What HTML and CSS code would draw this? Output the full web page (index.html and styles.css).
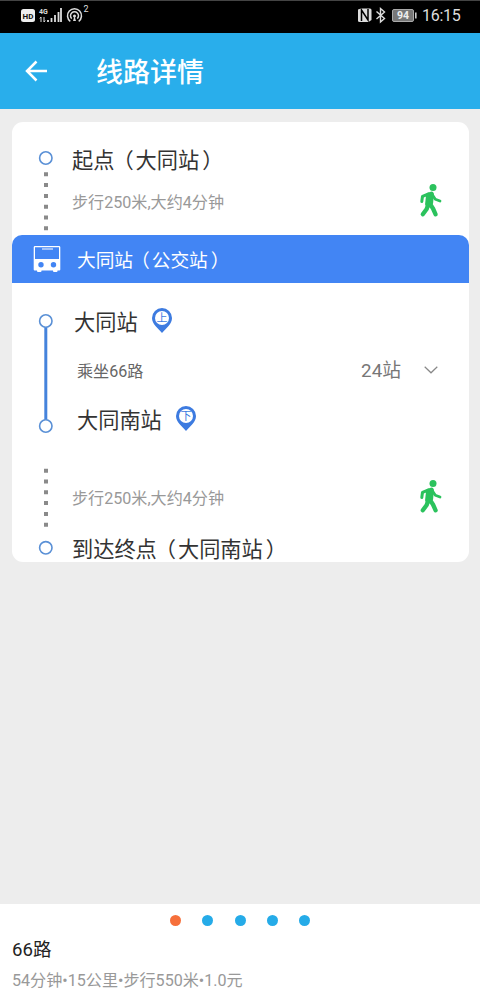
FILE: index.html
```html
<!DOCTYPE html>
<html lang="zh-CN">
<head>
<meta charset="utf-8">
<title>线路详情</title>
<link rel="stylesheet" href="styles.css">
</head>
<body>
<div class="app">
  <div class="status">
    <svg class="status-icons" width="80" height="33" viewBox="0 0 80 33">
      <rect x="1" y="9" width="14" height="13" rx="2.5" fill="#eee"/>
      <text class="hd" x="8" y="18.7" text-anchor="middle">HD</text>
      <text class="net" x="19" y="14">4G</text>
      <path d="M21 17v5M19.800 18.500l1.200-1.500M24 17v5M25.200 20.500l-1.200 1.500" stroke="#ddd" stroke-width="1" fill="none"/>
      <path d="M28 22v-2M31.500 22v-4M35 22v-7M38.500 22v-10M41 22V8" stroke="#ddd" stroke-width="1.800"/>
      <g fill="none" stroke="#ddd" stroke-width="1.500">
        <path d="M50.300 21.300a7 7 0 1 1 8.400 0"/>
        <path d="M51.700 18.600a4 4 0 1 1 5.600 0"/>
      </g>
      <circle cx="54.500" cy="16" r="1.500" fill="#ddd"/>
      <path d="M54.500 16l-1.500 5h3z" fill="#ddd"/>
      <text class="sup" x="63.500" y="12">2</text>
    </svg>
    <div class="status-right">
      <svg width="61" height="33" viewBox="0 0 61 33">
        <path d="M1 9.500l3-1h9q1.500 0 1.500 1.500v10l-3 2H2.500Q1 22 1 20.500z" fill="#ddd"/>
        <path d="M4.500 21V10l6.500 10V9" fill="none" stroke="#000" stroke-width="1.500"/>
        <path d="M19.500 11.500l8 7-4 3.500V8.500l4 3.500-8 7" fill="none" stroke="#ddd" stroke-width="1.400"/>
        <rect x="35.500" y="9.500" width="21" height="12" rx="1.500" fill="#777" stroke="#aaa"/>
        <rect x="58" y="12.500" width="1.600" height="6" fill="#ccc"/>
        <text class="battery" x="46" y="19.300" text-anchor="middle">94</text>
      </svg>
      <span class="time">16:15</span>
    </div>
  </div>
  <header class="header">
    <svg width="24" height="24" viewBox="0 0 24 24"><path d="M23 12H3.500M12.500 2.500L3 12l9.500 9.500" fill="none" stroke="#fff" stroke-width="2.500"/></svg>
    <h1>线路详情</h1>
  </header>
  <main class="main">
    <section class="card">
      <div class="leg start">
        <svg class="rail" width="60" height="113" viewBox="0 0 60 113">
          <circle cx="33.800" cy="36" r="6.200" class="ring"/>
          <path d="M34 50.300v60" class="dash"/>
        </svg>
        <div class="texts">
          <div class="stop">起点<span class="open">（</span>大同站<span class="close">）</span></div>
          <div class="walk"><span>步行250米,大约4分钟</span>
            <svg class="man" width="24" height="34" viewBox="0 0 24 34"><use href="#walker"/></svg>
          </div>
        </div>
      </div>
      <div class="band">
        <svg width="28" height="28" viewBox="0 0 28 28">
          <path d="M2 1h24q1.300 0 1.300 1.300V24.500q0 1-1 1H24.500v.5q0 1-1 1h-2.500q-1 0-1-1v-.5H8.500v.5q0 1-1 1H5q-1 0-1-1v-.5H1.700q-1 0-1-1V2.300Q.7 1 2 1z" fill="#fff"/>
          <path d="M2 2.200h24V14H2z" fill="#4285f4"/>
          <path d="M9 4h11" stroke="#fff" stroke-width="1.200"/>
          <circle cx="8" cy="19.800" r="2.700" fill="#4285f4"/><circle cx="20.500" cy="19.800" r="2.700" fill="#4285f4"/>
        </svg>
        <div class="band-name">大同站<span class="open">（</span>公交站<span class="close">）</span></div>
      </div>
      <div class="leg ride">
        <svg class="rail" width="62" height="171" viewBox="0 0 62 171">
          <path d="M33.800 44v93" stroke="#4583dc" stroke-width="3"/>
          <circle cx="33.800" cy="38" r="6.200" class="ring"/>
          <circle cx="33.800" cy="143" r="6.200" class="ring"/>
        </svg>
        <div class="texts">
          <div class="stop">大同站
            <svg class="pin" width="20" height="26" viewBox="0 0 20 26"><path d="M10 25C6 20.500 0 16 0 10a10 10 0 0 1 20 0c0 6-6 10.500-10 15z" fill="#3d7be0"/><circle cx="10" cy="10" r="7" fill="#fff"/><text x="10" y="14" text-anchor="middle">上</text></svg>
          </div>
          <div class="line"><span>乘坐66路</span><span class="count">24站</span>
            <svg width="14" height="8" viewBox="0 0 14 8"><path d="M.7.700L7 6.800 13.300.700" fill="none" stroke="#888" stroke-width="1.200"/></svg>
          </div>
          <div class="stop off">大同南站
            <svg class="pin" width="20" height="26" viewBox="0 0 20 26"><path d="M10 25C6 20.500 0 16 0 10a10 10 0 0 1 20 0c0 6-6 10.500-10 15z" fill="#3d7be0"/><circle cx="10" cy="10" r="7" fill="#fff"/><text x="10" y="14" text-anchor="middle">下</text></svg>
          </div>
        </div>
      </div>
      <div class="leg end">
        <svg class="rail" width="60" height="108" viewBox="0 0 60 108">
          <path d="M34 14.700v60" class="dash"/>
          <circle cx="33.800" cy="93.800" r="6.200" class="ring"/>
        </svg>
        <div class="texts">
          <div class="walk"><span>步行250米,大约4分钟</span>
            <svg class="man" width="24" height="34" viewBox="0 0 24 34">
              <g id="walker" fill="none" stroke="#2bc25d" stroke-linecap="round" stroke-linejoin="round">
                <circle cx="14" cy="3.500" r="3.500" fill="#2bc25d" stroke="none"/>
                <path d="M9.500 11l3-1-.8 9-3.200 1z" fill="#2bc25d" stroke-width="4.800"/>
                <path d="M9.500 10L3.500 12.300 2.800 17.500" stroke-width="3"/>
                <path d="M13.500 11l2.800 4.200 4.700 1.800" stroke-width="2.800"/>
                <path d="M9.500 19.500L7.700 25l-3.900 5.300M11 20l3 4.500 2.600 5.800" stroke-width="4.300"/>
              </g>
            </svg>
          </div>
          <div class="stop">到达终点<span class="open">（</span>大同南站<span class="close">）</span></div>
        </div>
      </div>
    </section>
  </main>
  <footer class="summary">
    <div class="dots"><i class="dot active"></i><i class="dot"></i><i class="dot"></i><i class="dot"></i><i class="dot"></i></div>
    <div class="route">66路</div>
    <div class="meta">54分钟•15公里•步行550米•1.0元</div>
  </footer>
</div>
</body>
</html>
```
FILE: styles.css
```css
* { box-sizing: border-box; }
body { margin: 0; font-family: Roboto, "Noto Sans CJK SC", sans-serif; }
svg { display: block; flex: none; }
.app { width: 480px; height: 1004px; display: flex; flex-direction: column; background: #ededed; white-space: nowrap; overflow: hidden; }
.status { height: 33px; background: #000; display: flex; justify-content: space-between; padding: 0 20px; border-top: 1px solid #444; }
.status-icons, .status-right svg { margin-top: -1px; }
.status-right { display: flex; align-items: center; gap: 4px; }
.time { color: #ddd; font-size: 16px; line-height: 28px; width: 38px; letter-spacing: -0.3px; padding-bottom: 2px; }
.hd { font: bold 8px Roboto, sans-serif; fill: #111; }
.net { font: bold 7px Roboto, sans-serif; fill: #ddd; }
.sup { font: 9px Roboto, sans-serif; fill: #ddd; }
.battery { font: bold 10.5px Roboto, sans-serif; fill: #eee; }
.header { height: 76px; background: #29aeeb; display: flex; align-items: center; padding: 0 24px; gap: 48px; }
.header h1 { margin: 0; padding-top: 4px; color: #fff; font-size: 27px; font-weight: 500; line-height: 40px; }
.main { flex: 1; padding: 13px 11px 0 12px; }
.card { background: #fff; border-radius: 11px; height: 440px; overflow: hidden; }
.leg { display: flex; }
.texts { flex: 1; display: flex; flex-direction: column; }
.ring { fill: #fff; stroke: #5a90d6; stroke-width: 1.6; }
.dash { stroke: #8a8a8a; stroke-width: 4; stroke-dasharray: 4 6.8; }
.stop { display: flex; align-items: center; height: 36px; padding-bottom: 1px; font-size: 21.2px; color: #333; }
.open { margin: 0 2px 0 -2px; }
.close { margin-left: 3px; }
.walk { display: flex; align-items: center; justify-content: space-between; height: 42px; padding-right: 26px; font-size: 16.1px; color: #999; }
.man { margin-top: -1px; }
.start { height: 113px; }
.start .texts { padding-top: 19px; }
.start .walk { margin-top: 3px; }
.band { height: 48px; background: #4285f4; border-radius: 10px 10px 0 0; display: flex; align-items: center; gap: 16px; padding-left: 21px; color: #fff; font-size: 18.7px; }
.band-name { padding-bottom: 1px; }
.ride { height: 171px; }
.ride .texts { padding-top: 20px; }
.pin { margin: 1px 0 0 14px; }
.pin text { font: 11px "Noto Sans CJK SC", sans-serif; fill: #3d7be0; }
.line { display: flex; align-items: center; height: 30px; margin: 16px 31px 16px 3px; font-size: 16.1px; color: #666; }
.count { margin-left: auto; margin-right: 23px; padding-bottom: 3px; font-size: 18.8px; color: #777; }
.off { padding-left: 3px; }
.end .texts { padding-top: 22px; }
.end .stop { margin-top: 12px; }
.summary { height: 100px; background: #fff; padding: 11px 12px 0; }
.dots { display: flex; justify-content: center; gap: 21.2px; }
.dot { width: 11px; height: 11px; border-radius: 50%; background: #25abe8; }
.dot.active { background: #f66f3a; }
.route { margin-top: 10px; font-size: 18.6px; line-height: 28px; color: #222; }
.meta { margin-top: 5px; font-size: 16.1px; line-height: 24px; color: #999; }
```
